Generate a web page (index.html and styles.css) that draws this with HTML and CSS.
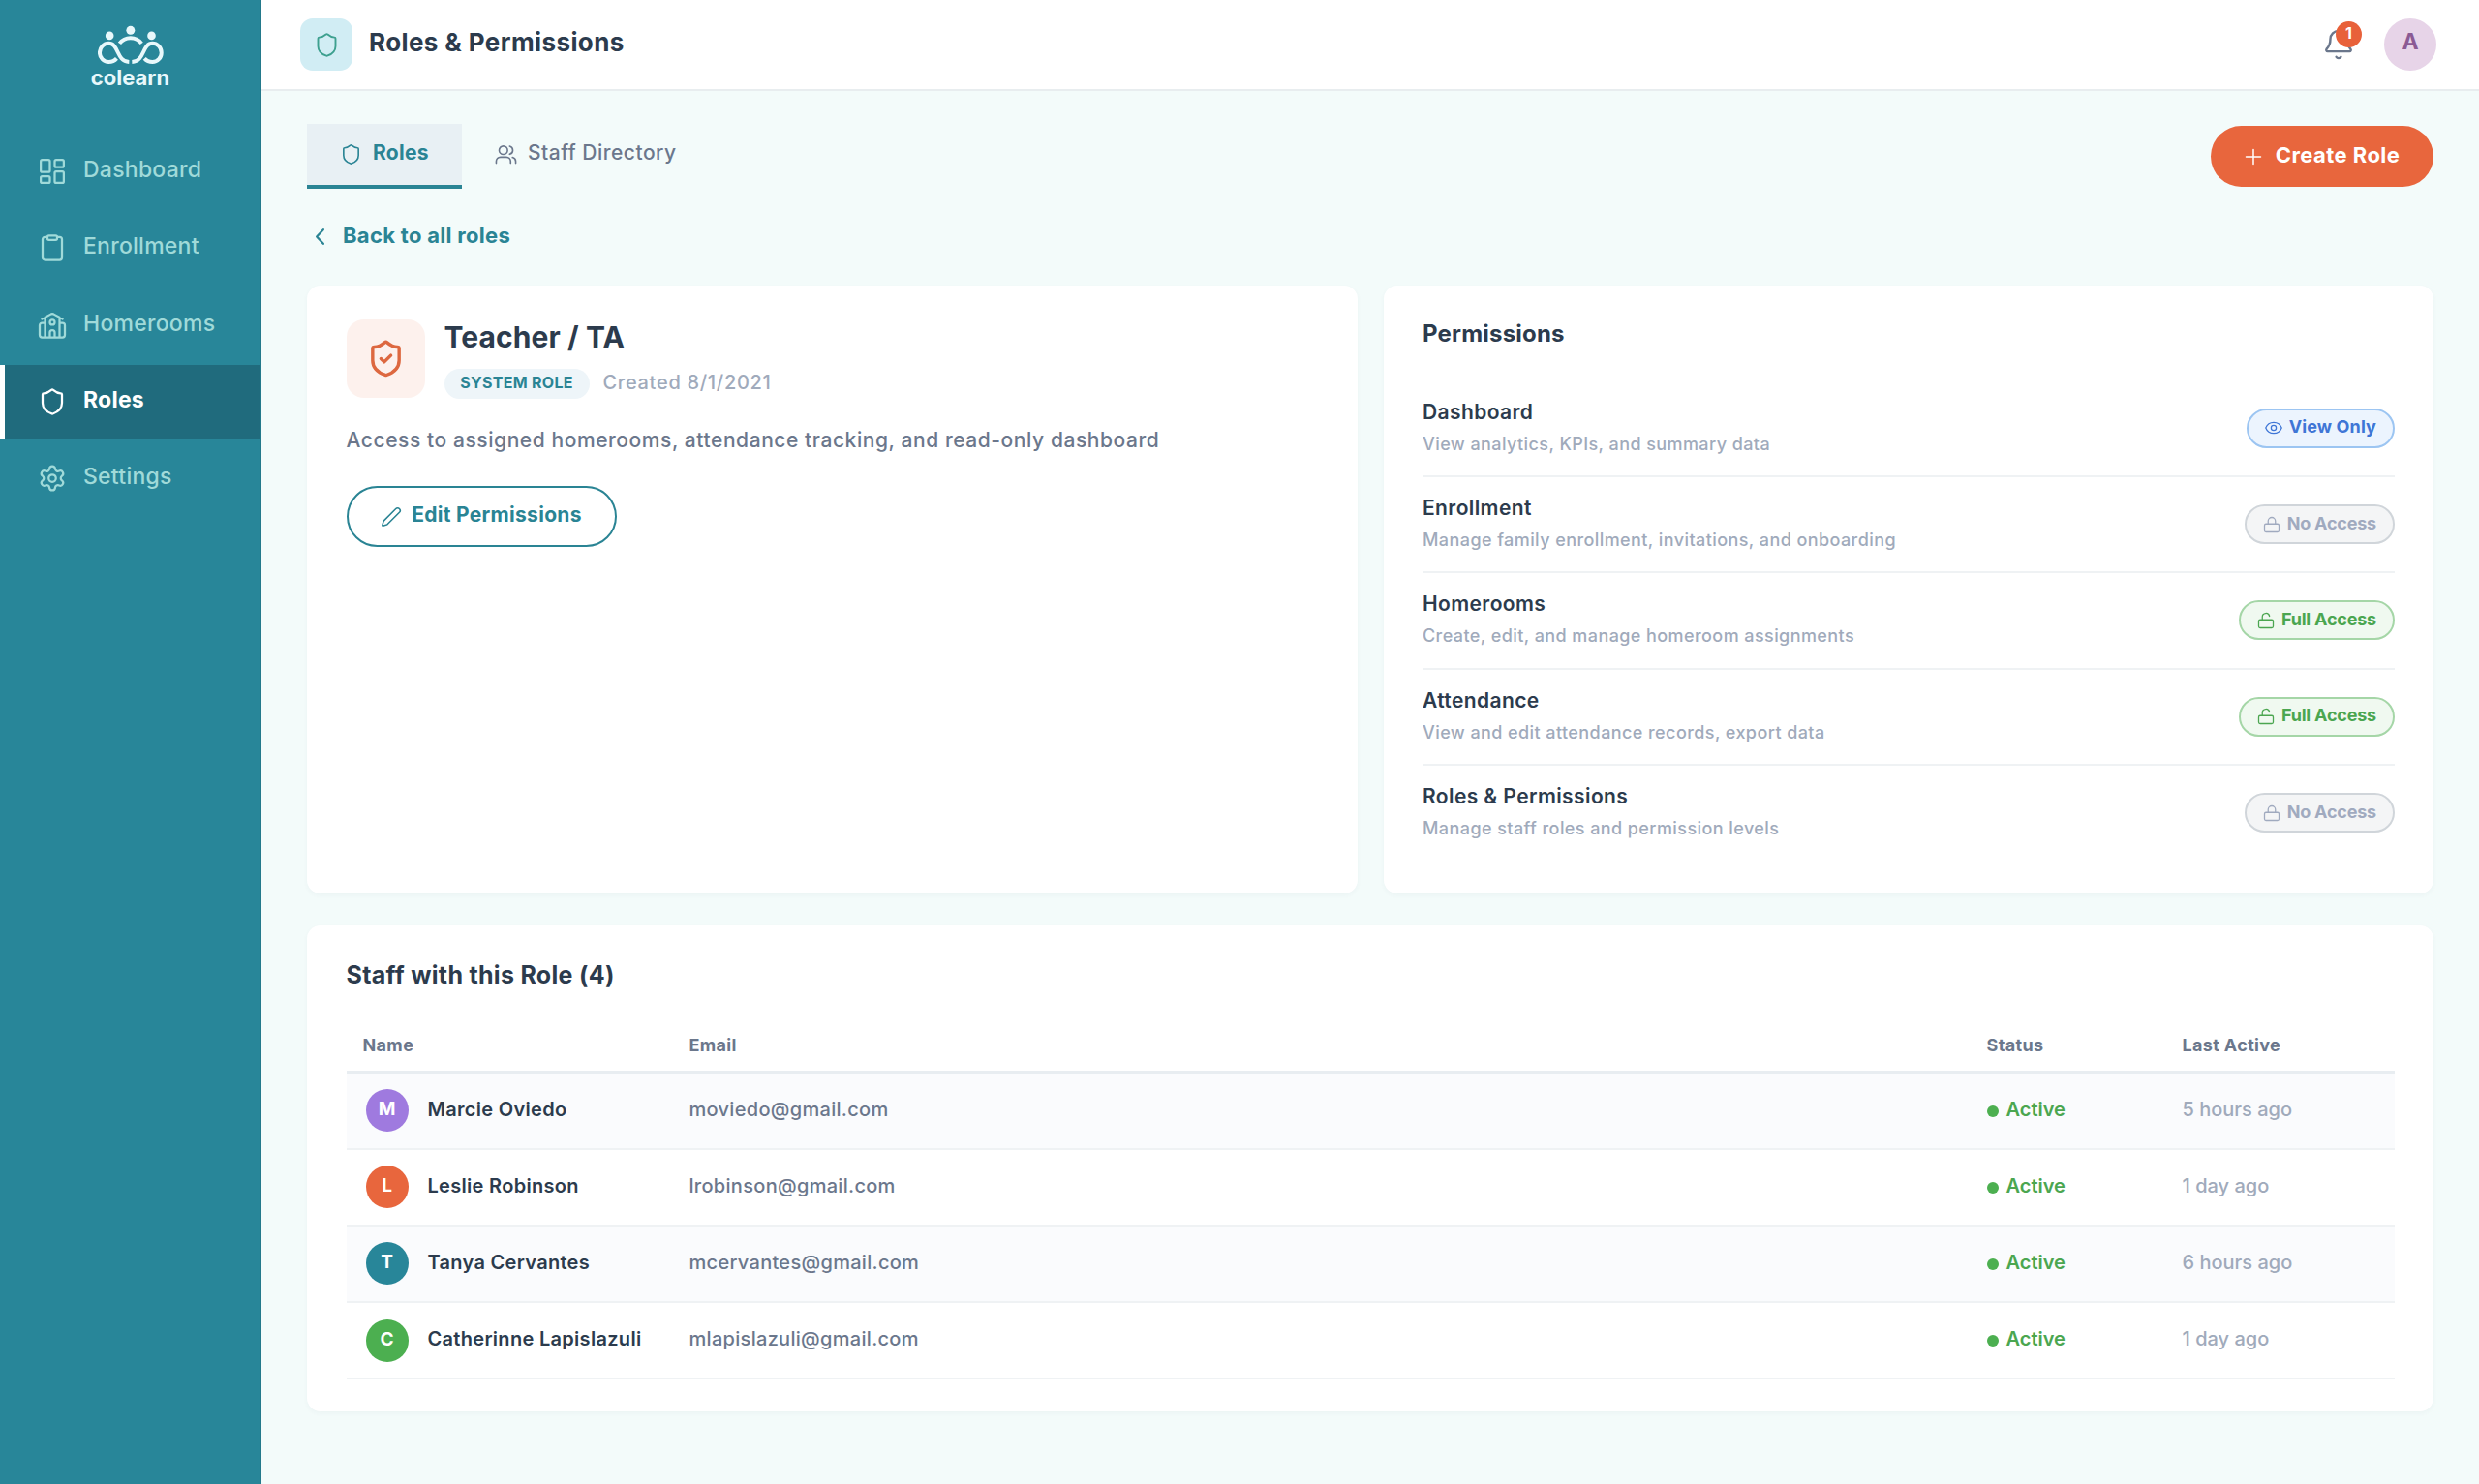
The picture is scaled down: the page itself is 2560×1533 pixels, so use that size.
FILE: index.html
```html
<!DOCTYPE html>
<html lang="en">

<head>
    <meta charset="UTF-8">
    <meta name="viewport" content="width=device-width, initial-scale=1.0">
    <title>Roles & Permissions</title>
    <link rel="stylesheet" href="styles.css">
</head>

<body>
    <!-- Icons -->
    <svg class="sprite">
        <symbol id="i-shield" viewBox="0 0 24 24">
            <path d="M20 13c0 5-3.5 7.5-7.66 8.95a1 1 0 0 1-.67-.01C7.5 20.5 4 18 4 13V6a1 1 0 0 1 1-1c2 0 4.5-1.2 6.24-2.72a1.17 1.17 0 0 1 1.52 0C14.51 3.81 17 5 19 5a1 1 0 0 1 1 1z"/>
        </symbol>
        <symbol id="i-lock" viewBox="0 0 24 24">
            <rect x="2" y="11" width="20" height="11" rx="2"/>
            <path d="M7 11V7a5 5 0 0 1 10 0v4"/>
        </symbol>
        <symbol id="i-unlock" viewBox="0 0 24 24">
            <rect x="2" y="11" width="20" height="11" rx="2"/>
            <path d="M7 11V7a5 5 0 0 1 9.9-1"/>
        </symbol>
    </svg>

    <!-- Sidebar -->
    <aside class="sidebar">
        <div class="logo">
            <svg class="logo-mark" viewBox="92 34 204 124">
                <circle cx="128" cy="67" r="13"/>
                <circle cx="193.5" cy="50" r="13.5"/>
                <circle cx="259" cy="67" r="13"/>
                <path d="M150 138C143 146 134 149 125 149A28 29 0 0 1 125 91C158 91 148 147 189 149"/>
                <path d="M237 138C244 146 253 149 262 149A28 29 0 0 0 262 91C229 91 239 147 198 149"/>
                <path d="M159 91C176 68 211 68 228 91"/>
            </svg>
            <span class="logo-text">colearn</span>
        </div>
        <nav class="nav">
            <a class="nav-item">
                <svg class="icon" viewBox="0 0 24 24"><rect x="2.5" y="2.5" width="7.5" height="10" rx="1.2"/><rect x="14" y="2.5" width="7.5" height="6" rx="1.2"/><rect x="14" y="12" width="7.5" height="9.5" rx="1.2"/><rect x="2.5" y="16" width="7.5" height="5.5" rx="1.2"/></svg>
                <span class="label">Dashboard</span>
            </a>
            <a class="nav-item">
                <svg class="icon" viewBox="0 0 24 24"><rect x="8" y="1.8" width="8" height="3.6" rx="1.2"/><path d="M16 3h2a2 2 0 0 1 2 2v15a2 2 0 0 1-2 2H6a2 2 0 0 1-2-2V5a2 2 0 0 1 2-2h2"/></svg>
                <span class="label">Enrollment</span>
            </a>
            <a class="nav-item">
                <svg class="icon" viewBox="0 0 24 24"><path d="M14 22v-4a2 2 0 0 0-4 0v4M18 5.5V22M6 5.5V22M3.5 6.8l7.6-4.1a2 2 0 0 1 1.8 0l7.6 4.1M6 10H3.6a2 2 0 0 0-2 2v8a2 2 0 0 0 2 2h16.8a2 2 0 0 0 2-2v-8a2 2 0 0 0-2-2H18"/><circle cx="12" cy="9.5" r="2"/></svg>
                <span class="label">Homerooms</span>
            </a>
            <a class="nav-item active">
                <svg class="icon"><use href="#i-shield"/></svg>
                <span class="label">Roles</span>
            </a>
            <a class="nav-item">
                <svg class="icon" viewBox="0 0 24 24"><path d="M9.671 4.136a2.34 2.34 0 0 1 4.659 0 2.34 2.34 0 0 0 3.319 1.915 2.34 2.34 0 0 1 2.33 4.033 2.34 2.34 0 0 0 0 3.831 2.34 2.34 0 0 1-2.33 4.033 2.34 2.34 0 0 0-3.319 1.915 2.34 2.34 0 0 1-4.659 0 2.34 2.34 0 0 0-3.32-1.915 2.34 2.34 0 0 1-2.33-4.033 2.34 2.34 0 0 0 0-3.831A2.34 2.34 0 0 1 6.35 6.051a2.34 2.34 0 0 0 3.319-1.915"/><circle cx="12" cy="12" r="3"/></svg>
                <span class="label">Settings</span>
            </a>
        </nav>
    </aside>

    <main class="main">
        <!-- Top bar -->
        <header class="topbar">
            <div class="topbar-icon"><svg class="icon"><use href="#i-shield"/></svg></div>
            <h1 class="page-title">Roles &amp; Permissions</h1>
            <div class="bell">
                <svg class="icon" viewBox="0 0 24 24"><path d="M10.268 21a2 2 0 0 0 3.464 0M3.262 15.326A1 1 0 0 0 4 17h16a1 1 0 0 0 .74-1.673C19.41 13.956 18 12.499 18 8A6 6 0 0 0 6 8c0 4.499-1.411 5.956-2.738 7.326"/></svg>
                <span class="bell-count">1</span>
            </div>
            <div class="user">A</div>
        </header>

        <div class="content">
            <div class="toolbar">
                <div class="tabs">
                    <a class="tab active">
                        <svg class="icon"><use href="#i-shield"/></svg>
                        <span class="label">Roles</span>
                    </a>
                    <a class="tab">
                        <svg class="icon" viewBox="0 0 24 24"><path d="M17 21.5v-2a4.5 4.5 0 0 0-4.5-4.5H6a4.5 4.5 0 0 0-4.5 4.5v2M22.5 21.5v-2a4.5 4.5 0 0 0-3.5-4.3M16 3.1a4.5 4.5 0 0 1 0 8.7"/><circle cx="9.2" cy="7.5" r="4.5"/></svg>
                        <span class="label">Staff Directory</span>
                    </a>
                </div>
                <button class="btn btn-primary">
                    <svg class="icon" viewBox="0 0 24 24"><path d="M12 2v20M2 12h20"/></svg>
                    <span class="label">Create Role</span>
                </button>
            </div>

            <a class="back">
                <svg class="icon" viewBox="0 0 24 24"><path d="M15 5.5 9 12l6 6.5"/></svg>
                <span class="label">Back to all roles</span>
            </a>

            <div class="cards">
                <section class="card role-card">
                    <div class="role-head">
                        <div class="role-icon"><svg class="icon" viewBox="0 0 24 24"><use href="#i-shield"/><path d="m9 12 2 2 4-4"/></svg></div>
                        <div>
                            <h2 class="role-name">Teacher / TA</h2>
                            <div class="role-meta">
                                <span class="role-badge">SYSTEM ROLE</span>
                                <span class="role-date">Created 8/1/2021</span>
                            </div>
                        </div>
                    </div>
                    <p class="role-desc">Access to assigned homerooms, attendance tracking, and read-only dashboard</p>
                    <button class="btn btn-outline">
                        <svg class="icon" viewBox="0 0 24 24"><path d="M21.2 6.8a2.8 2.8 0 0 0-4-4L3.8 16.2a2 2 0 0 0-.5.8L2 21.4a.5.5 0 0 0 .6.6l4.4-1.3a2 2 0 0 0 .8-.5z"/></svg>
                        <span class="label">Edit Permissions</span>
                    </button>
                </section>

                <section class="card perm-card">
                    <h3 class="perm-title">Permissions</h3>
                    <div class="perm">
                        <div>
                            <div class="perm-name">Dashboard</div>
                            <div class="perm-desc">View analytics, KPIs, and summary data</div>
                        </div>
                        <span class="access view"><svg class="icon" viewBox="0 0 24 24"><path d="M1 12c2-5 6-7.5 11-7.5S21 7 23 12c-2 5-6 7.5-11 7.5S3 17 1 12z"/><circle cx="12" cy="12" r="3.5"/></svg><span class="label">View Only</span></span>
                    </div>
                    <div class="perm">
                        <div>
                            <div class="perm-name">Enrollment</div>
                            <div class="perm-desc">Manage family enrollment, invitations, and onboarding</div>
                        </div>
                        <span class="access none"><svg class="icon"><use href="#i-lock"/></svg><span class="label">No Access</span></span>
                    </div>
                    <div class="perm">
                        <div>
                            <div class="perm-name">Homerooms</div>
                            <div class="perm-desc">Create, edit, and manage homeroom assignments</div>
                        </div>
                        <span class="access full"><svg class="icon"><use href="#i-unlock"/></svg><span class="label">Full Access</span></span>
                    </div>
                    <div class="perm">
                        <div>
                            <div class="perm-name">Attendance</div>
                            <div class="perm-desc">View and edit attendance records, export data</div>
                        </div>
                        <span class="access full"><svg class="icon"><use href="#i-unlock"/></svg><span class="label">Full Access</span></span>
                    </div>
                    <div class="perm">
                        <div>
                            <div class="perm-name">Roles &amp; Permissions</div>
                            <div class="perm-desc">Manage staff roles and permission levels</div>
                        </div>
                        <span class="access none"><svg class="icon"><use href="#i-lock"/></svg><span class="label">No Access</span></span>
                    </div>
                </section>
            </div>

            <!-- Staff table -->
            <section class="card staff-card">
                <h3 class="staff-title">Staff with this Role (4)</h3>
                <table class="staff">
                    <thead>
                        <tr>
                            <th class="col-name">Name</th>
                            <th>Email</th>
                            <th class="col-status">Status</th>
                            <th class="col-last">Last Active</th>
                        </tr>
                    </thead>
                    <tbody>
                        <tr>
                            <td><div class="person"><span class="avatar purple">M</span><span class="person-name">Marcie Oviedo</span></div></td>
                            <td class="email">moviedo@gmail.com</td>
                            <td><span class="status">Active</span></td>
                            <td class="last">5 hours ago</td>
                        </tr>
                        <tr>
                            <td><div class="person"><span class="avatar orange">L</span><span class="person-name">Leslie Robinson</span></div></td>
                            <td class="email">lrobinson@gmail.com</td>
                            <td><span class="status">Active</span></td>
                            <td class="last">1 day ago</td>
                        </tr>
                        <tr>
                            <td><div class="person"><span class="avatar teal">T</span><span class="person-name">Tanya Cervantes</span></div></td>
                            <td class="email">mcervantes@gmail.com</td>
                            <td><span class="status">Active</span></td>
                            <td class="last">6 hours ago</td>
                        </tr>
                        <tr>
                            <td><div class="person"><span class="avatar green">C</span><span class="person-name">Catherinne Lapislazuli</span></div></td>
                            <td class="email">mlapislazuli@gmail.com</td>
                            <td><span class="status">Active</span></td>
                            <td class="last">1 day ago</td>
                        </tr>
                    </tbody>
                </table>
            </section>
        </div>
    </main>
</body>

</html>
```

FILE: styles.css
```css
* {
    box-sizing: border-box;
    margin: 0;
    padding: 0;
}

body {
    display: flex;
    min-height: 100vh;
    background-color: #f3fbfa;
    color: #2c3b4d;
    font-family: Inter, Lato, sans-serif;
    font-weight: 500;
}

.sprite {
    position: absolute;
    width: 0;
    height: 0;
}

.icon {
    display: block;
    flex: none;
    fill: none;
    stroke: currentColor;
    stroke-width: 1.7;
    stroke-linecap: round;
    stroke-linejoin: round;
}

/* text sits a little above the middle of its row */
.label {
    padding-bottom: 4px;
    white-space: nowrap;
}

/* Sidebar */
.sidebar {
    width: 270px;
    background-color: #288699;
    border-right: 1px solid #23798b;
    flex: none;
}

.logo {
    height: 139px;
    padding-top: 26px;
    display: flex;
    flex-direction: column;
    align-items: center;
    color: #e8f8fb;
}

.logo-mark {
    width: 68px;
    height: 41px;
    fill: currentColor;
}

.logo-mark path {
    fill: none;
    stroke: currentColor;
    stroke-width: 12;
}

.logo-text {
    font-size: 22px;
    line-height: 26px;
    font-weight: 700;
}

.nav {
    display: flex;
    flex-direction: column;
    gap: 3.3px;
}

.nav-item {
    height: 76px;
    padding-left: 34px;
    border-left: 5px solid transparent;
    display: flex;
    align-items: center;
    gap: 17px;
    color: #a0dad9;
    font-size: 23px;
    letter-spacing: .25px;
}

.nav-item .icon {
    width: 30px;
    height: 30px;
    stroke-width: 1.8;
}

.nav-item.active {
    background-color: #206b7d;
    border-left-color: white;
    color: white;
    font-weight: 700;
}

/* Top bar */
.main {
    flex: 1;
}

.topbar {
    height: 94px;
    padding: 0 44px 0 40px;
    background-color: white;
    border-bottom: 2px solid #e8edef;
    display: flex;
    align-items: center;
}

.topbar-icon {
    width: 54px;
    height: 54px;
    border-radius: 13px;
    background-color: #d1edf4;
    color: #3da08f;
    display: flex;
    align-items: center;
    justify-content: center;
}

.topbar-icon .icon {
    width: 27px;
    height: 27px;
}

.page-title {
    margin-left: 17px;
    padding-bottom: 5px;
    font-size: 26px;
    font-weight: 700;
    letter-spacing: .4px;
}

.bell {
    position: relative;
    margin-left: auto;
    margin-right: 30px;
    color: #6b778c;
}

.bell .icon {
    width: 34px;
    height: 34px;
}

.bell-count {
    position: absolute;
    top: -7px;
    right: -7px;
    width: 27px;
    height: 27px;
    border-radius: 50%;
    background-color: #e8613a;
    color: white;
    font-size: 16px;
    font-weight: 700;
    line-height: 25px;
    text-align: center;
}

.user {
    width: 54px;
    height: 54px;
    border-radius: 50%;
    background-color: #e7d4e8;
    color: #8b5a94;
    font-size: 23px;
    font-weight: 700;
    line-height: 49px;
    text-align: center;
}

/* Content */
.content {
    padding: 34px 47px 0;
}

.toolbar {
    display: flex;
    justify-content: space-between;
    align-items: center;
}

.tabs {
    display: flex;
}

.tab {
    height: 67px;
    padding: 0 34px;
    border-bottom: 4px solid transparent;
    display: flex;
    align-items: center;
    gap: 11px;
    color: #6b778c;
    font-size: 21px;
    letter-spacing: .5px;
}

.tab .icon {
    width: 23px;
    height: 23px;
}

.tab.active {
    background-color: #e8f0f4;
    border-bottom-color: #2a8494;
    color: #2a8494;
    font-weight: 700;
    letter-spacing: .3px;
}

.btn {
    height: 63px;
    border: none;
    border-radius: 32px;
    display: flex;
    align-items: center;
    justify-content: center;
    font-family: inherit;
    font-size: 21px;
    font-weight: 700;
}

.btn-primary {
    width: 230px;
    gap: 14px;
    background-color: #e8663d;
    color: white;
    font-size: 22px;
    letter-spacing: .45px;
}

.btn-primary .icon {
    width: 18px;
    height: 18px;
    stroke-width: 2;
}

.btn-outline {
    width: 279px;
    gap: 10px;
    margin-top: 31px;
    background-color: white;
    border: 2px solid #2a8494;
    color: #2a8494;
    letter-spacing: .3px;
}

.btn-outline .icon {
    width: 22px;
    height: 22px;
}

.back {
    height: 99.5px;
    display: flex;
    align-items: center;
    gap: 10px;
    color: #2a8494;
    font-size: 22px;
    font-weight: 700;
    letter-spacing: .3px;
}

.back .icon {
    width: 27px;
    height: 27px;
    stroke-width: 2;
}

.card {
    background-color: white;
    border-radius: 14px;
    box-shadow: 0 2px 5px rgba(40, 80, 90, .04);
}

.cards {
    display: grid;
    grid-template-columns: 1fr 1fr;
    gap: 27px;
}

/* Role card */
.role-card {
    padding: 35.5px 40.5px;
}

.role-head {
    display: flex;
    gap: 20px;
}

.role-icon {
    width: 81px;
    height: 81px;
    border-radius: 18px;
    background-color: #fdf1ed;
    color: #dd6840;
    display: flex;
    align-items: center;
    justify-content: center;
}

.role-icon .icon {
    width: 41px;
    height: 41px;
    stroke-width: 2;
}

.role-name {
    font-size: 30px;
    line-height: 36px;
    font-weight: 700;
    letter-spacing: .1px;
}

.role-meta {
    margin-top: 15px;
    display: flex;
    align-items: center;
    gap: 14px;
}

.role-badge {
    width: 150px;
    height: 31px;
    border-radius: 16px;
    background-color: #eef5f9;
    color: #2a8494;
    font-size: 16px;
    font-weight: 700;
    line-height: 28px;
    letter-spacing: .3px;
    text-align: center;
}

.role-date {
    padding-bottom: 4px;
    color: #a0aabb;
    font-size: 20px;
    letter-spacing: .7px;
}

.role-desc {
    margin-top: 26px;
    color: #6b778c;
    font-size: 21px;
    line-height: 33px;
    letter-spacing: .57px;
    white-space: nowrap;
}

/* Permissions card */
.perm-card {
    height: 628px;
    padding: 32.5px 40.5px;
}

.perm-title {
    margin-bottom: 30.5px;
    font-size: 24px;
    line-height: 36px;
    font-weight: 700;
    letter-spacing: .2px;
}

.perm {
    height: 99.4px;
    border-bottom: 2px solid #eff2f4;
    display: flex;
    align-items: center;
    justify-content: space-between;
}

.perm:last-child {
    border-bottom-color: transparent;
}

.perm-name {
    font-size: 21px;
    line-height: 30px;
    font-weight: 600;
    letter-spacing: .4px;
}

.perm-desc {
    margin-top: 5px;
    padding-bottom: 2px;
    color: #a0aabb;
    font-size: 18px;
    line-height: 26px;
    letter-spacing: .42px;
}

.access {
    height: 41px;
    padding: 0 16.5px;
    border: 2px solid;
    border-radius: 21px;
    display: flex;
    align-items: center;
    gap: 7px;
    font-size: 18px;
    font-weight: 700;
    letter-spacing: -.2px;
}

.access .icon {
    width: 18px;
    height: 18px;
    stroke-width: 1.7;
}

.access .label {
    padding-bottom: 3px;
}

.access.view {
    background-color: #ecf4fe;
    border-color: #9cc5f2;
    color: #3f76d6;
    letter-spacing: .1px;
}

.access.none {
    background-color: #f4f5f6;
    border-color: #d0d5da;
    color: #a0aabf;
}

.access.full {
    background-color: #f0f9f0;
    border-color: #a5d6a7;
    color: #4ba650;
}

/* Staff table */
.staff-card {
    height: 502px;
    margin-top: 33.5px;
    padding: 32.5px 40.5px;
}

.staff-title {
    margin-bottom: 28px;
    font-size: 25px;
    line-height: 36px;
    font-weight: 700;
    letter-spacing: .3px;
}

.staff {
    width: 100%;
    table-layout: fixed;
    border-collapse: separate;
    border-spacing: 0;
    font-size: 20px;
}

.staff th {
    height: 56px;
    padding: 0 17px;
    border-bottom: 3px solid #e8edf1;
    color: #6b778c;
    font-size: 18px;
    font-weight: 700;
    letter-spacing: .35px;
    text-align: left;
}

.staff td {
    height: 79.2px;
    padding: 0 17px 3px;
    border-bottom: 2px solid #eff2f4;
}

.staff tbody tr:nth-child(odd) {
    background-color: #fafbfd;
}

.col-name {
    width: 337px;
}

.col-status {
    width: 202px;
}

.col-last {
    width: 236px;
}

.person {
    padding: 3px 0 0 3px;
    display: flex;
    align-items: center;
    gap: 20px;
}

.person-name {
    padding-bottom: 3px;
    font-weight: 600;
    letter-spacing: .3px;
    white-space: nowrap;
}

.avatar {
    width: 44px;
    height: 44px;
    border-radius: 50%;
    color: white;
    font-size: 19px;
    font-weight: 700;
    line-height: 41px;
    text-align: center;
}

.avatar.purple {
    background-color: #9f7adf;
}

.avatar.orange {
    background-color: #e8663d;
}

.avatar.teal {
    background-color: #288699;
}

.avatar.green {
    background-color: #4caf50;
}

.email {
    color: #6b778c;
    letter-spacing: .3px;
}

.status {
    display: flex;
    align-items: center;
    gap: 8px;
    color: #4ba650;
    font-weight: 600;
}

.status::before {
    content: "";
    width: 12px;
    height: 12px;
    margin-top: 4px;
    border-radius: 50%;
    background-color: #4caf50;
}

.last {
    color: #a0aabb;
}
```
